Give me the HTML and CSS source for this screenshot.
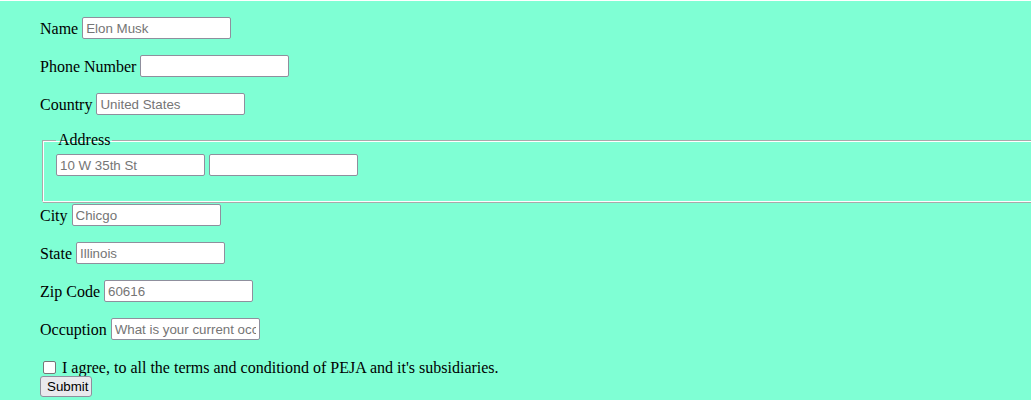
FILE: index.html
```html
<!DOCTYPE html>
<html>
<head>
<meta charset="utf-8">
<link rel="stylesheet" href="styles.css">
</head>
<body>
<form class="form">
  <div class="row"><label class="lbl">Name</label><input class="field" placeholder="Elon Musk"></div>
  <div class="row"><label class="lbl">Phone Number</label><input class="field"></div>
  <div class="row"><label class="lbl">Country</label><input class="field" placeholder="United States"></div>
  <fieldset class="address">
    <legend class="legend">Address</legend>
    <div class="addr-row"><input class="field" placeholder="10 W 35th St"><input class="field"></div>
  </fieldset>
  <div class="row after-fs"><label class="lbl">City</label><input class="field" placeholder="Chicgo"></div>
  <div class="row"><label class="lbl">State</label><input class="field" placeholder="Illinois"></div>
  <div class="row"><label class="lbl">Zip Code</label><input class="field" placeholder="60616"></div>
  <div class="row"><label class="lbl">Occuption</label><input class="field" placeholder="What is your current occupation?"></div>
  <div class="check-row"><input type="checkbox" class="check"><span class="lbl">I agree, to all the terms and conditiond of PEJA and it's subsidiaries.</span></div>
  <div class="submit-row"><button type="submit" class="btn">Submit</button></div>
</form>
</body>
</html>
```

FILE: styles.css
```css
html, body {
  margin: 0;
  padding: 0;
  background: #7fffd4;
}
body {
  border-top: 1px solid #ffffff;
  overflow: hidden;
  height: 399px;
}
.form {
  display: flex;
  flex-direction: column;
  padding: 16px 0 0 40px;
  overflow: hidden;
  font-family: "Liberation Serif", "Times New Roman", serif;
  font-size: 16px;
  color: #000;
}
.row {
  display: flex;
  align-items: center;
  gap: 4px;
  height: 22px;
  margin-bottom: 16px;
}
.row .lbl {
  padding-top: 1px;
}
.row.after-fs {
  margin-top: 2px;
}
.lbl {
  font-family: "Liberation Serif", "Times New Roman", serif;
  font-size: 16px;
  line-height: 18px;
  white-space: nowrap;
}
.field {
  box-sizing: border-box;
  width: 149px;
  height: 22px;
  margin: 0;
  padding: 1px 3px;
  border: 1px solid #8f8f9d;
  border-radius: 2px;
  background: #fff;
  font-family: "Liberation Sans", Arial, sans-serif;
  font-size: 13.33px;
  color: #000;
}
.field::placeholder {
  color: #757575;
}
.address {
  margin: 0 -40px 0 2px;
  padding: 5px 12px 25px 13px;
  border-color: #a9a9a9 #fff #fff #a9a9a9;
  border-style: solid;
  border-width: 1px;
  box-shadow: inset 1px 1px 0 #fff, 1px 1px 0 #a9a9a9;
  min-width: 0;
}
.legend {
  padding: 0 2px;
  font-size: 16px;
  line-height: 18px;
}
.addr-row {
  display: flex;
  gap: 4px;
}
.check-row {
  display: flex;
  align-items: center;
  gap: 5px;
  height: 19px;
  margin-top: 1px;
  padding-left: 3px;
}
.check {
  appearance: none;
  -webkit-appearance: none;
  box-sizing: border-box;
  width: 13px;
  height: 13px;
  margin: 1px 0 0;
  border: 1px solid #767676;
  border-radius: 2px;
  background: #fff;
}
.check-row .lbl {
  margin-left: 1px;
  padding-top: 2px;
}
.submit-row {
  display: flex;
}
.btn {
  box-sizing: border-box;
  height: 21px;
  width: 52px;
  margin: 0;
  padding: 1px 6px;
  border: 1px solid #8f8f9d;
  border-radius: 3px;
  background: #e9e9ed;
  font-family: "Liberation Sans", Arial, sans-serif;
  font-size: 13.33px;
  color: #000;
}
```
